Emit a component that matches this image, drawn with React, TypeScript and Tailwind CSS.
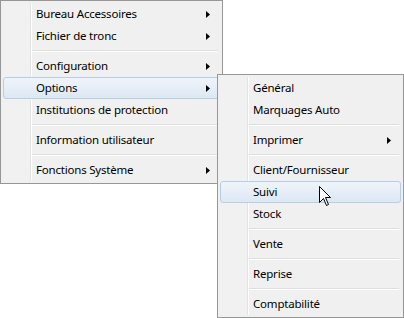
import React from "react";

type Entry = { label?: string; sub?: boolean; hot?: boolean; sep?: boolean };

const mainItems: Entry[] = [
  { label: "Bureau Accessoires", sub: true },
  { label: "Fichier de tronc", sub: true },
  { sep: true },
  { label: "Configuration", sub: true },
  { label: "Options", sub: true, hot: true },
  { label: "Institutions de protection" },
  { sep: true },
  { label: "Information utilisateur" },
  { sep: true },
  { label: "Fonctions Système", sub: true },
];

const optionItems: Entry[] = [
  { label: "Général" },
  { label: "Marquages Auto" },
  { sep: true },
  { label: "Imprimer", sub: true },
  { sep: true },
  { label: "Client/Fournisseur" },
  { label: "Suivi", hot: true },
  { label: "Stock" },
  { sep: true },
  { label: "Vente" },
  { sep: true },
  { label: "Reprise" },
  { sep: true },
  { label: "Comptabilité" },
];

function Arrow() {
  return (
    <svg width="4" height="7" viewBox="0 0 4 7" className="shrink-0">
      <polygon points="0,0 4,3.5 0,7" fill="#000" />
    </svg>
  );
}

function Menu({ items }: { items: Entry[] }) {
  return (
    <div className="border border-[#979797] bg-[#f0f0f0] p-[2px]">
      <div className="bg-[linear-gradient(to_right,#f1f1f1_0,#f1f1f1_27px,#e2e3e3_27px,#e2e3e3_28px,#ffffff_28px,#ffffff_29px,#f0f0f0_29px)]">
        {items.map((it, i) =>
          it.sep ? (
            <div key={i} className="h-[8px] flex flex-col justify-center pl-[29px] pr-[2px]">
              <div className="h-px bg-[#e0e0e0]" />
              <div className="h-px bg-white" />
            </div>
          ) : (
            <div
              key={i}
              className={`h-[22px] flex items-center pl-[32px] pr-[9px] rounded-[3px] border ${
                it.hot
                  ? "border-[#b6cfe8] bg-[linear-gradient(to_bottom,#eff4fa,#dde8f4)]"
                  : "border-transparent"
              }`}
            >
              <span className="flex-1 text-black leading-none">{it.label}</span>
              {it.sub && <Arrow />}
            </div>
          )
        )}
      </div>
    </div>
  );
}

export default function App() {
  return (
    <div className="relative w-[404px] h-[318px] bg-white text-[11.5px] tracking-[-0.2px] font-['Segoe_UI','Noto_Sans',sans-serif] overflow-hidden">
      <div className="w-[223px]">
        <Menu items={mainItems} />
      </div>
      <div className="absolute left-[217px] top-[74px] w-[187px]">
        <Menu items={optionItems} />
      </div>
      <svg
        className="absolute left-[319px] top-[186px]"
        width="13"
        height="21"
        viewBox="0 0 13 21"
      >
        <path
          d="M0.5 0.5 L0.5 16.5 L4.5 12.5 L7.5 19.5 L9.5 18.5 L6.5 11.5 L11.5 11.5 Z"
          fill="#fff"
          stroke="#000"
          strokeWidth="1"
          strokeLinejoin="miter"
        />
      </svg>
    </div>
  );
}
